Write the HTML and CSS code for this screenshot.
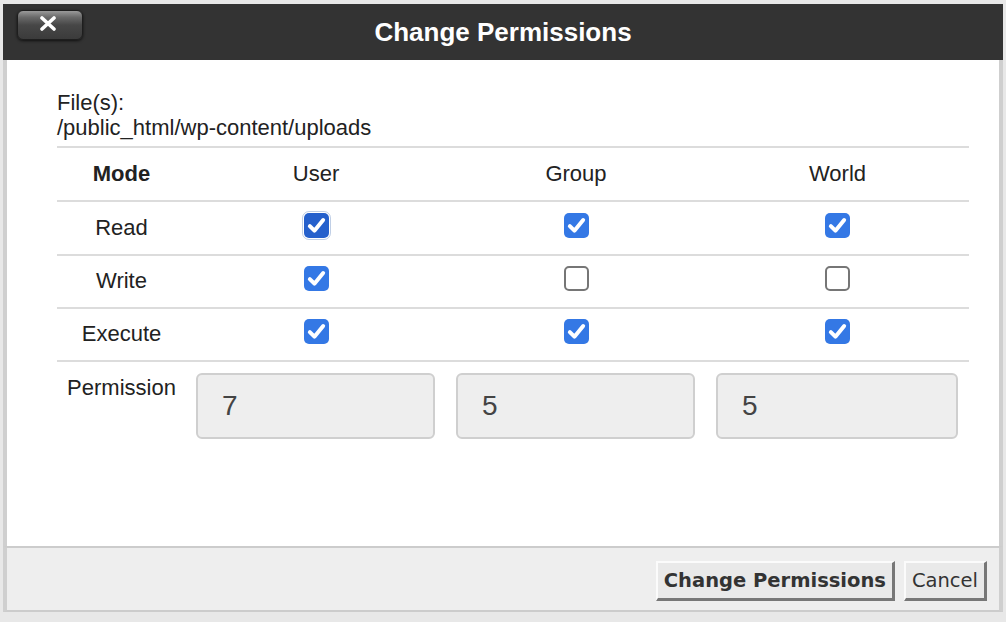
FILE: index.html
```html
<!DOCTYPE html>
<html lang="en">
<head>
<meta charset="utf-8">
<title>Change Permissions</title>
<link rel="stylesheet" href="styles.css">
</head>
<body>
<div class="dialog">
  <div class="titlebar">
    <button class="close" aria-label="Close">
      <svg width="18" height="15" viewBox="0 0 18 15"><path d="M3 2 L15 13 M15 2 L3 13" stroke="#fff" stroke-width="3.6" stroke-linecap="round" fill="none"/></svg>
    </button>
    <h1 class="title">Change Permissions</h1>
  </div>
  <div class="content">
    <div class="files">
      <div>File(s):</div>
      <div>/public_html/wp-content/uploads</div>
    </div>
    <div class="perm-table">
      <div class="row">
        <div class="cell mode bold">Mode</div>
        <div class="cell">User</div>
        <div class="cell">Group</div>
        <div class="cell">World</div>
      </div>
      <div class="row">
        <div class="cell mode">Read</div>
        <div class="cell"><span class="cb on focus"><svg viewBox="0 0 24 24"><path class="tick" d="M5.6 12.6 L10 17 L18.4 6.8"/></svg></span></div>
        <div class="cell"><span class="cb on"><svg viewBox="0 0 24 24"><path class="tick" d="M5.6 12.6 L10 17 L18.4 6.8"/></svg></span></div>
        <div class="cell"><span class="cb on"><svg viewBox="0 0 24 24"><path class="tick" d="M5.6 12.6 L10 17 L18.4 6.8"/></svg></span></div>
      </div>
      <div class="row">
        <div class="cell mode">Write</div>
        <div class="cell"><span class="cb on"><svg viewBox="0 0 24 24"><path class="tick" d="M5.6 12.6 L10 17 L18.4 6.8"/></svg></span></div>
        <div class="cell"><span class="cb"></span></div>
        <div class="cell"><span class="cb"></span></div>
      </div>
      <div class="row">
        <div class="cell mode">Execute</div>
        <div class="cell"><span class="cb on"><svg viewBox="0 0 24 24"><path class="tick" d="M5.6 12.6 L10 17 L18.4 6.8"/></svg></span></div>
        <div class="cell"><span class="cb on"><svg viewBox="0 0 24 24"><path class="tick" d="M5.6 12.6 L10 17 L18.4 6.8"/></svg></span></div>
        <div class="cell"><span class="cb on"><svg viewBox="0 0 24 24"><path class="tick" d="M5.6 12.6 L10 17 L18.4 6.8"/></svg></span></div>
      </div>
      <div class="row perm-row">
        <div class="cell mode perm-label">Permission</div>
        <input class="perm-input" type="text" value="7" readonly>
        <input class="perm-input" type="text" value="5" readonly>
        <input class="perm-input" type="text" value="5" readonly>
      </div>
    </div>
  </div>
  <div class="footer">
    <button class="btn primary">Change Permissions</button>
    <button class="btn">Cancel</button>
  </div>
</div>
</body>
</html>
```
FILE: styles.css
```css
html, body {
  margin: 0;
  padding: 0;
}
body {
  background: #e8e8e8;
  font-family: "Liberation Sans", Arial, sans-serif;
  color: #222;
}
.dialog {
  width: 1000px;
  margin: 4px 0 0 3px;
}
.titlebar {
  height: 56px;
  background: #333333;
  display: grid;
  grid-template-columns: 1fr auto 1fr;
  align-items: center;
}
.close {
  justify-self: start;
  align-self: start;
  margin: 6px 0 0 14px;
  width: 66px;
  height: 30px;
  padding: 0;
  border: 1px solid #1e1e1e;
  border-radius: 6px;
  background: linear-gradient(#9a9a9a 0%, #6a6a6a 22%, #474747 50%, #3b3b3b 100%);
  box-shadow: 0 1px 3px rgba(0,0,0,0.7);
  display: flex;
  align-items: center;
  justify-content: center;
}
.close svg {
  display: block;
  margin-left: -4px;
  margin-top: -3px;
}
.title {
  margin: 0;
  font-size: 26px;
  font-weight: bold;
  color: #fff;
  line-height: 30px;
}
.content {
  background: #fff;
  border-left: 4px solid #cfcfcf;
  border-right: 4px solid #cfcfcf;
  height: 486px;
  box-sizing: border-box;
  padding: 30px 30px 0 50px;
}
.files {
  font-size: 22px;
  line-height: 25px;
  margin-bottom: 6px;
}
.perm-table {
  border-top: 2px solid #dcdcdc;
  font-size: 22px;
}
.row {
  display: grid;
  grid-template-columns: 129px 260px 260px 1fr;
  height: 52px;
  align-items: center;
  justify-items: center;
  border-bottom: 2px solid #dcdcdc;
}
.row:nth-child(3),
.row:nth-child(4) {
  height: 51px;
}
.bold {
  font-weight: bold;
}
.cell {
  line-height: 25px;
  padding-bottom: 2px;
}
.cb {
  display: block;
  box-sizing: border-box;
  width: 25px;
  height: 25px;
  border-radius: 5px;
  border: 2px solid #767676;
  background: #fff;
  margin-bottom: 4px;
}
.cb.on {
  border: none;
  background: #3478e5;
}
.cb.focus {
  background: #2560cc;
  outline: 1px solid rgba(130, 160, 205, 0.5);
  outline-offset: 1px;
}
.cb svg {
  display: block;
  width: 25px;
  height: 25px;
}
.tick {
  fill: none;
  stroke: #fff;
  stroke-width: 3.8;
  stroke-linecap: round;
  stroke-linejoin: round;
}
.perm-row {
  height: auto;
  border-bottom: none;
  align-items: start;
  justify-items: stretch;
  padding-top: 11px;
}
.perm-label {
  justify-self: center;
  margin-top: 2px;
}
.perm-input {
  box-sizing: border-box;
  height: 66px;
  margin: 0 11px 0 10px;
  min-width: 0;
  border: 2px solid #cfcfcf;
  border-radius: 6px;
  background: #eeeeee;
  font-family: "Liberation Sans", Arial, sans-serif;
  font-size: 28px;
  color: #444;
  padding: 0 0 0 24px;
  outline: none;
}
.footer {
  background: #eeeeee;
  border-top: 2px solid #cccccc;
  border-bottom: 2px solid #cccccc;
  border-left: 4px solid #cfcfcf;
  border-right: 4px solid #cfcfcf;
  display: flex;
  justify-content: flex-end;
  align-items: flex-start;
  gap: 9px;
  padding: 13px 12px 0 0;
  box-sizing: border-box;
  height: 66px;
}
.btn {
  height: 40px;
  box-sizing: border-box;
  padding: 0 6px;
  background: #e9e9e9;
  border-style: solid;
  border-width: 2px 3px 3px 2px;
  border-color: #fbfbfb #777 #777 #fbfbfb;
  border-radius: 0;
  font-family: "DejaVu Sans", Verdana, sans-serif;
  font-size: 19.5px;
  color: #333;
  line-height: 1;
}
.btn.primary {
  font-weight: bold;
}
```
